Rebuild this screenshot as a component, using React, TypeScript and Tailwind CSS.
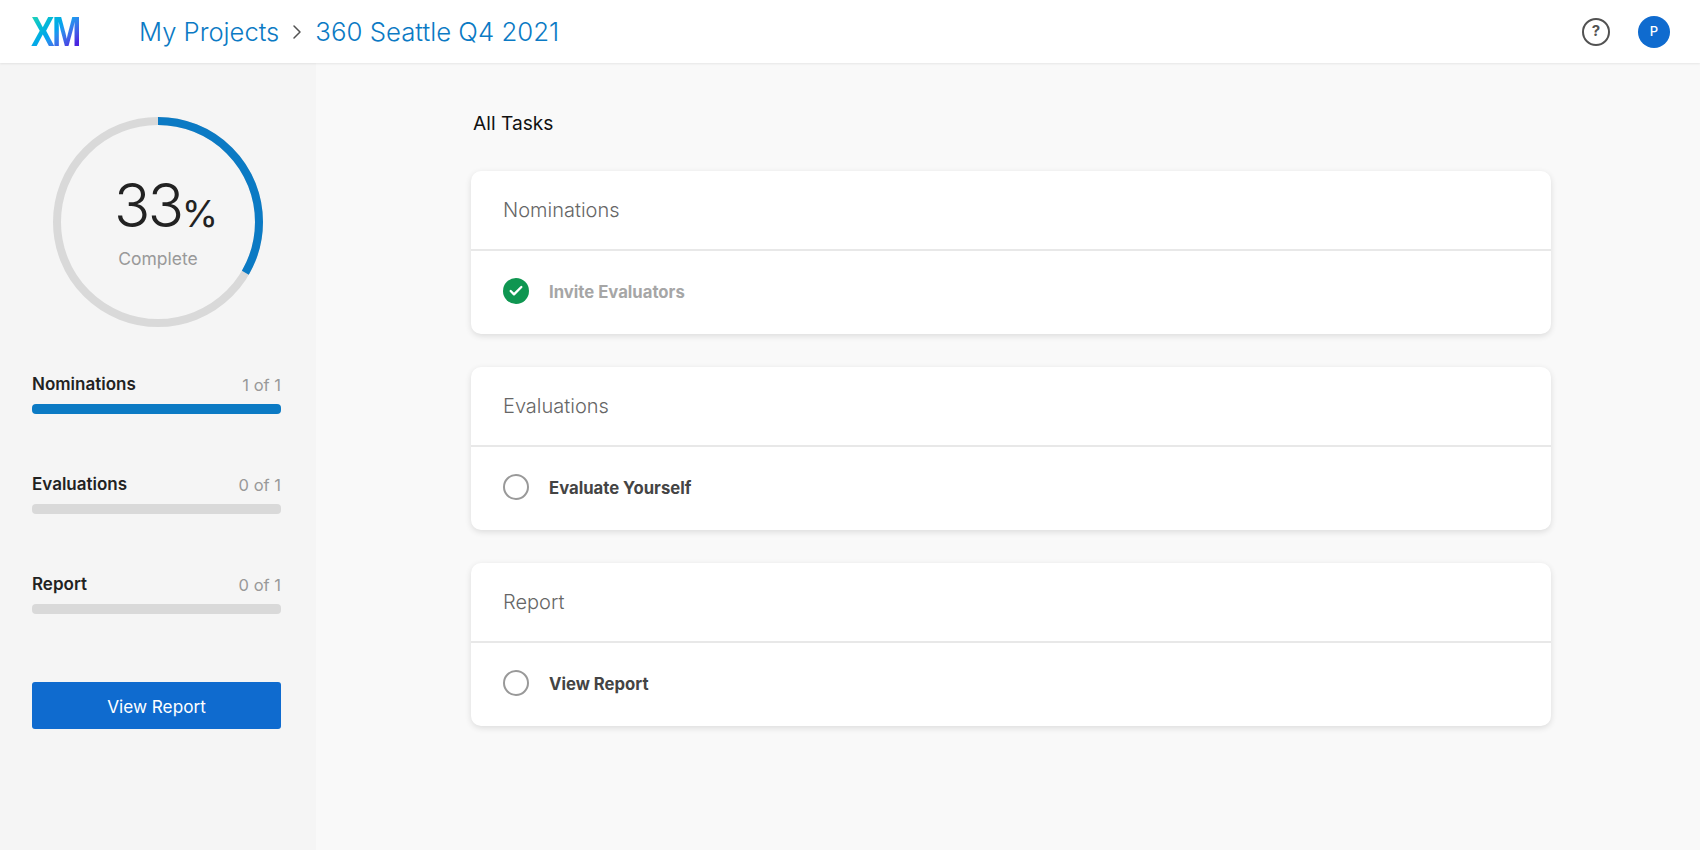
import React from 'react';
import { Check, ChevronRight } from 'lucide-react';

const progress = [
  { name: 'Nominations', count: '1 of 1', done: true },
  { name: 'Evaluations', count: '0 of 1', done: false },
  { name: 'Report', count: '0 of 1', done: false },
];

const tasks = [
  { section: 'Nominations', task: 'Invite Evaluators', done: true },
  { section: 'Evaluations', task: 'Evaluate Yourself', done: false },
  { section: 'Report', task: 'View Report', done: false },
];

const ProgressRing: React.FC = () => (
  <div className="relative w-[210px] h-[210px] ml-[21px]">
    <svg className="w-full h-full" viewBox="0 0 210 210" fill="none">
      <circle cx="105" cy="105" r="101" stroke="#d9d9d9" strokeWidth="8" />
      <circle
        cx="105"
        cy="105"
        r="101"
        stroke="#0b7ac4"
        strokeWidth="8"
        strokeDasharray="211.5 634.6"
        transform="rotate(-90 105 105)"
      />
    </svg>
    <div className="absolute inset-0 flex flex-col items-center">
      <div className="mt-[53px] h-[70px] pl-[16px] flex items-baseline text-[#222222] font-light">
        <span className="text-[60px] leading-[70px] tracking-[-2.5px]">33</span>
        <span className="text-[37px] leading-[70px] font-normal">%</span>
      </div>
      <span className="mt-[7px] text-[17.5px] leading-6 text-[#999999]">Complete</span>
    </div>
  </div>
);

export default function App() {
  return (
    <div className="h-[850px] w-[1700px] flex flex-col overflow-hidden bg-[#f9f9f9] font-['Inter',sans-serif]">
      <header className="relative z-10 h-[63px] shrink-0 flex items-center bg-white shadow-[0_1px_2px_rgba(0,0,0,0.08)] pl-[31px] pr-[30px]">
        <div className="w-[108px] flex">
          <span className="inline-block origin-left scale-x-[0.82] text-[43px] leading-none font-bold tracking-[-3px] font-['Liberation_Sans',sans-serif] bg-gradient-to-br from-[#2bdca6] via-[#08a0f0] to-[#4a25e0] to-85% bg-clip-text text-transparent">
            XM
          </span>
        </div>
        <nav className="flex items-center pt-[1px] text-[25.6px] font-light text-[#0b7ac4]">
          <span>My Projects</span>
          <ChevronRight className="w-6 h-6 mx-[6px] text-[#525252]" strokeWidth={1.5} />
          <span className="text-[25.8px]">360 Seattle Q4 2021</span>
        </nav>
        <div className="ml-auto flex items-center gap-[28px]">
          <div className="w-7 h-7 rounded-full border-2 border-[#525252] flex items-center justify-center text-[15px] font-bold text-[#525252]">
            ?
          </div>
          <div className="w-8 h-8 rounded-full bg-[#0f6bcf] flex items-center justify-center text-[13px] font-medium text-white">
            P
          </div>
        </div>
      </header>

      <div className="flex flex-1 min-h-0">
        <aside className="w-[316px] shrink-0 bg-[#f5f5f5] pt-[54px] pl-8 pr-[35px]">
          <ProgressRing />
          <div className="mt-[45px] flex flex-col gap-[58px]">
            {progress.map((p) => (
              <div key={p.name}>
                <div className="flex justify-between items-center h-6 pt-[2px] text-[17px]">
                  <span className="font-semibold text-[#222222]">{p.name}</span>
                  <span className="text-[16.5px] text-[#999999]">{p.count}</span>
                </div>
                <div className={`mt-[8px] h-[10px] rounded-[4px] ${p.done ? 'bg-[#0b7ac4]' : 'bg-[#d9d9d9]'}`} />
              </div>
            ))}
          </div>
          <button className="mt-[68px] w-full h-[47px] pt-[2px] rounded-[3px] bg-[#0f6bcf] text-white text-[17.2px]">
            View Report
          </button>
        </aside>

        <main className="flex-1 pl-[155px] pr-[149px] pt-[48px]">
          <h1 className="pl-[2px] text-[19.2px] leading-6 text-[#111111]">All Tasks</h1>
          <div className="mt-[36px] flex flex-col gap-[33px]">
            {tasks.map((t) => (
              <section key={t.section} className="rounded-[10px] bg-white shadow-[0_2px_6px_rgba(0,0,0,0.12)]">
                <div className="h-[80px] flex items-center px-8 text-xl font-light text-[#666666] border-b-2 border-[#e8e8e8]">
                  {t.section}
                </div>
                <div className="h-[83px] flex items-center px-8 pb-[3px] gap-5">
                  {t.done ? (
                    <div className="w-[26px] h-[26px] rounded-full bg-[#0f9651] flex items-center justify-center">
                      <Check className="w-4 h-4 text-white" strokeWidth={3.5} />
                    </div>
                  ) : (
                    <div className="w-[26px] h-[26px] rounded-full border-2 border-[#999999]" />
                  )}
                  <span className={`mt-[4px] text-[16.7px] font-bold ${t.done ? 'text-[#a6a6a6]' : 'text-[#444444]'}`}>{t.task}</span>
                </div>
              </section>
            ))}
          </div>
        </main>
      </div>
    </div>
  );
}
